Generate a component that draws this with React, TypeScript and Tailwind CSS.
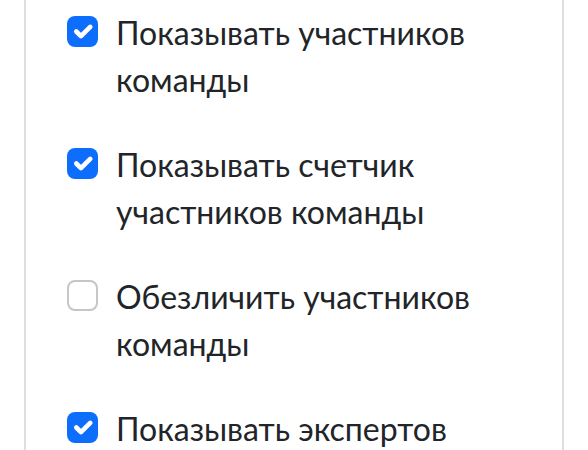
const items = [
  { label: 'Показывать участников команды', checked: true },
  { label: 'Показывать счетчик участников команды', checked: true },
  { label: 'Обезличить участников команды', checked: false },
  { label: 'Показывать экспертов', checked: true },
]

function Check({ checked }: { checked: boolean }) {
  if (checked) {
    return (
      <span className="mt-[7px] flex h-[31px] w-[31px] shrink-0 items-center justify-center rounded-[8px] bg-[#0d6efd]">
        <svg viewBox="0 0 20 20" className="h-[31px] w-[31px]">
          <path d="m6 10 3 3 6-6" fill="none" stroke="#fff" strokeWidth="3" strokeLinecap="round" strokeLinejoin="round" />
        </svg>
      </span>
    )
  }
  return <span className="mt-[7px] h-[31px] w-[31px] shrink-0 rounded-[8px] border-2 border-[#c6c6c6] bg-white" />
}

export default function App() {
  return (
    <div className="h-[450px] w-[588px] overflow-hidden bg-white"
         style={{ fontFamily: 'Lato, "Open Sans", sans-serif' }}>
      <div className="ml-[24px] h-full w-[540px] border-x-2 border-[#dedede] pl-[41px] pt-[9px]">
        <div className="flex flex-col gap-[38px]">
          {items.map((it) => (
            <label key={it.label} className="flex gap-[18px]">
              <Check checked={it.checked} />
              <span className="w-[440px] text-[32px] leading-[47px] text-[#212529]">{it.label}</span>
            </label>
          ))}
        </div>
      </div>
    </div>
  )
}
